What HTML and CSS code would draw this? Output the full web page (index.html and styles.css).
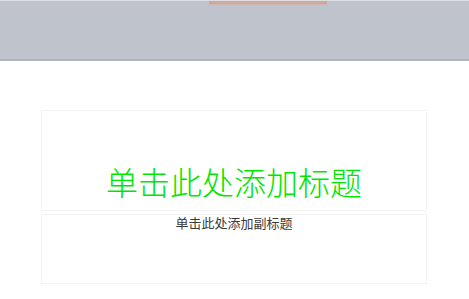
FILE: index.html
```html
<!DOCTYPE html>
<html lang="zh">
<head>
<meta charset="utf-8">
<link rel="stylesheet" href="styles.css">
</head>
<body>
<div class="toolbar">
  <div class="tab"></div>
</div>
<div class="canvas">
  <div class="slide">
    <div class="title-box"><span class="title">单击此处添加标题</span></div>
    <div class="subtitle-box"><span class="subtitle">单击此处添加副标题</span></div>
  </div>
</div>
</body>
</html>
```
FILE: styles.css
```css
html, body {
  margin: 0;
  padding: 0;
  background: #ffffff;
  font-family: "Noto Sans CJK SC", "Noto Sans", sans-serif;
}
.toolbar {
  height: 58px;
  background: #bfc3cc;
  border-top: 1px solid #dcdee3;
  border-bottom: 2px solid #b0b4bc;
  display: flex;
  flex-direction: column;
}
.tab {
  margin-left: 209px;
  width: 118px;
  height: 3px;
  background: #d3a99c;
  border-bottom: 1px solid #c9b7b6;
}
.canvas {
  padding-top: 49px;
}
.slide {
  margin-left: 41px;
  width: 386px;
  display: flex;
  flex-direction: column;
  gap: 3px;
}
.title-box {
  height: 99px;
  border: 1px solid #f3f3f3;
  display: flex;
  justify-content: center;
  align-items: flex-end;
}
.title {
  font-size: 32px;
  font-weight: 300;
  line-height: 1;
  color: #00e600;
  margin-bottom: 13px;
}
.subtitle-box {
  height: 68px;
  border: 1px solid #f3f3f3;
  display: flex;
  justify-content: center;
  align-items: flex-start;
}
.subtitle {
  font-size: 13px;
  line-height: 1;
  color: #3a3a3a;
  margin-top: 1px;
}
```
